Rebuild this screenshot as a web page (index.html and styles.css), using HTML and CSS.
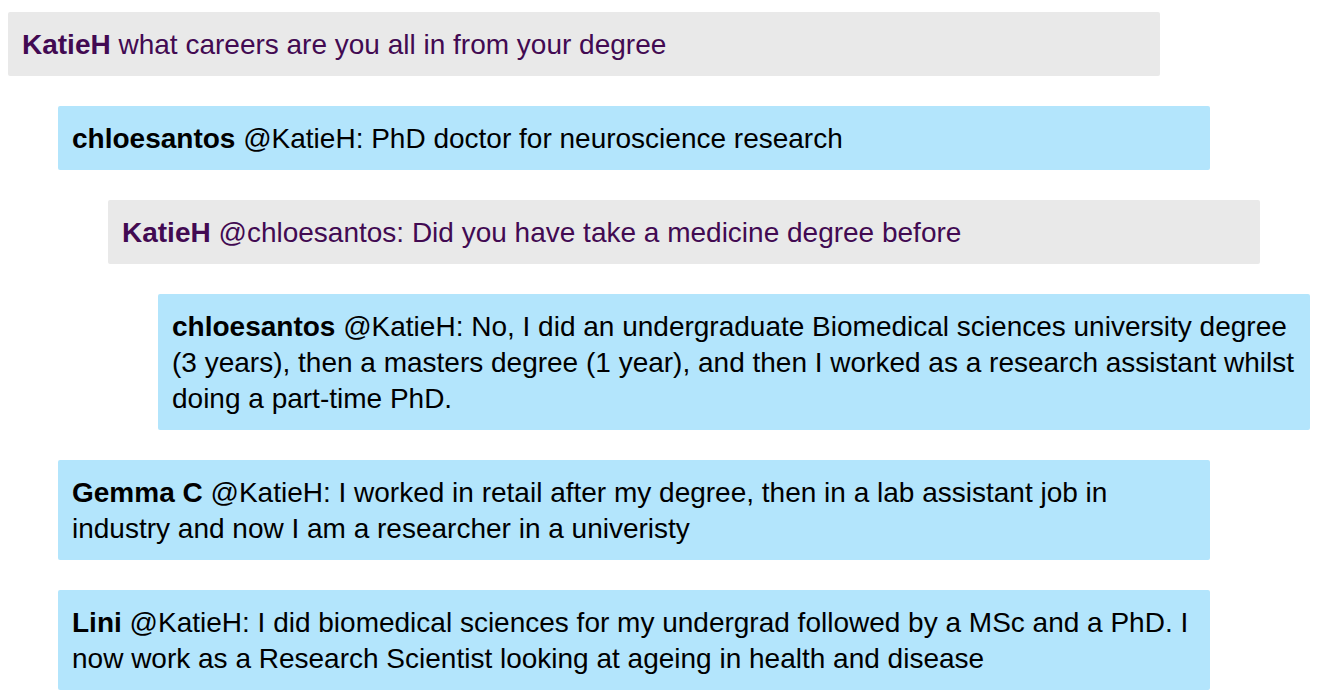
FILE: index.html
```html
<!DOCTYPE html>
<html lang="en">
<head>
<meta charset="utf-8">
<title>Discussion thread</title>
<link rel="stylesheet" href="styles.css">
</head>
<body>
<div class="thread">
  <div class="post post-host depth-0"><b class="author">KatieH</b> what careers are you all in from your degree</div>
  <div class="post post-reply depth-1"><b class="author">chloesantos</b> @KatieH: PhD doctor for neuroscience research</div>
  <div class="post post-host depth-2"><b class="author">KatieH</b> @chloesantos: Did you have take a medicine degree before</div>
  <div class="post post-reply depth-3"><b class="author">chloesantos</b> @KatieH: No, I did an undergraduate Biomedical sciences university degree (3 years), then a masters degree (1 year), and then I worked as a research assistant whilst doing a part-time PhD.</div>
  <div class="post post-reply depth-1"><b class="author">Gemma C</b> @KatieH: I worked in retail after my degree, then in a lab assistant job in industry and now I am a researcher in a univeristy</div>
  <div class="post post-reply depth-1"><b class="author">Lini</b> @KatieH: I did biomedical sciences for my undergrad followed by a MSc and a PhD. I now work as a Research Scientist looking at ageing in health and disease</div>
</div>
</body>
</html>
```
FILE: styles.css
```css
html, body {
  margin: 0;
  padding: 0;
  background: #ffffff;
}

body {
  font-family: "Liberation Sans", Arial, Helvetica, sans-serif;
  font-size: 28px;
  line-height: 36px;
}

.thread {
  display: flex;
  flex-direction: column;
  align-items: flex-start;
  gap: 30px;
  padding: 12px 8px 8px 8px;
}

.post {
  box-sizing: border-box;
  width: 1152px;
  padding: 15px 14px 13px 14px;
  border-radius: 2px;
}

.post-host {
  background: #e9e9e9;
  color: #420a52;
}

.post-reply {
  background: #b3e5fc;
  color: #000000;
}

.author {
  font-weight: bold;
}

.depth-0 { margin-left: 0; }
.depth-1 { margin-left: 50px; }
.depth-2 { margin-left: 100px; }
.depth-3 { margin-left: 150px; }
```
